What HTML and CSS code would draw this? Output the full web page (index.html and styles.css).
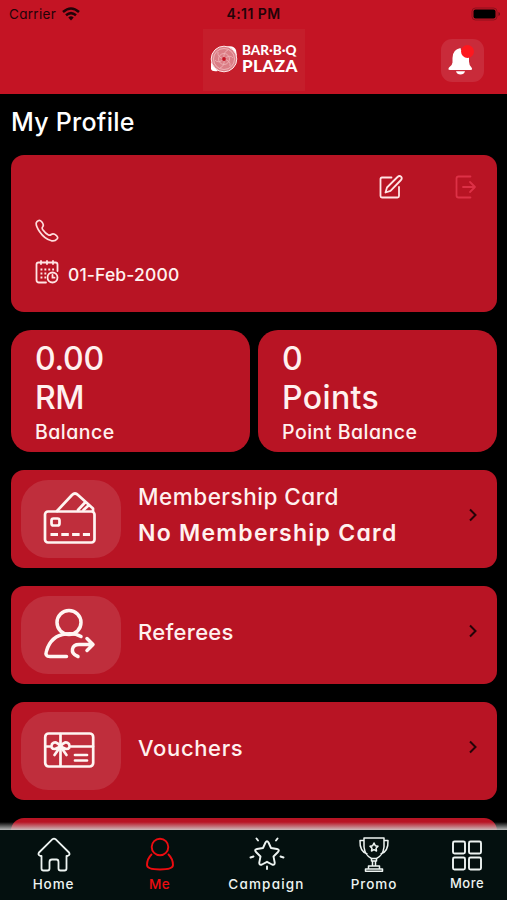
FILE: index.html
```html
<!DOCTYPE html>
<html lang="en">
<head>
<meta charset="utf-8">
<title>My Profile</title>
<link rel="stylesheet" href="styles.css">
</head>
<body>
<div class="app">
  <header class="header">
    <div class="status">
      <div class="carrier"><span>Carrier</span>
        <svg width="18" height="14" viewBox="0 0 18 14" fill="none" stroke="#220308" stroke-width="2.5"><path d="M1 5Q9-2 17 5"/><path d="M4 8.3Q9 4 14 8.3"/><path d="M6.3 10.4Q9 8.2 11.7 10.4L9 13.5Z" fill="#220308" stroke="none"/></svg>
      </div>
      <span class="time">4:11 PM</span>
      <svg class="battery" width="30" height="14" viewBox="0 0 30 14"><rect x="1" y="1" width="25" height="12" rx="3.5" fill="none" stroke="#8d101c"/><rect x="2.5" y="2.5" width="22" height="9" rx="2" fill="#000"/><path d="M27.5 5v4q1.5-.5 1.5-2t-1.500-2" fill="#6e0b16"/></svg>
    </div>
    <div class="brandbar">
      <div class="logo">
        <svg width="28" height="28" viewBox="0 0 28 28"><path d="M17 1.500Q24 0 26 5L27 11ZM1 17V24Q2 27 8 26Z" fill="#fff"/><circle cx="14" cy="14" r="12.800" fill="#db7e86" stroke="#ffe8e8" stroke-width="1"/><circle cx="14" cy="14" r="10.500" fill="none" stroke="#f3bfc2" stroke-width=".8"/><g fill="none" stroke="#f0b4b8" stroke-width=".8"><path d="M14 14Q13 7 18 5M14 14Q20 9 23 13M14 14Q21 16 20 21M14 14Q15 21 10 23M14 14Q8 19 5 15M14 14Q7 12 8 7"/><circle cx="14" cy="14" r="5.500"/></g><circle cx="14" cy="14" r="1.900" fill="#c41424"/></svg>
        <div class="wordmark"><span class="w1">BAR·B·Q</span><span class="w2">PLAZA</span></div>
      </div>
      <div class="bell">
        <svg width="43" height="43" viewBox="0 0 43 43"><path d="M19.500 9Q11.500 10.500 11.500 19V23.500Q11.500 26 8 28.500Q6.500 31 9 31H29.500Q32 31 30.500 28.500Q28 26 28 22.500V18L20 11ZM15 32.200H24Q23 35.500 19.500 35.500T15 32.200" fill="#fff"/><circle cx="26.500" cy="12.500" r="6.500" fill="#fd171e"/></svg>
      </div>
    </div>
  </header>
  <main class="content">
    <h1>My Profile</h1>
    <section class="profile card">
      <div class="actions">
        <svg width="24" height="24" viewBox="0 0 24 24" fill="none" stroke="#ffe4e4" stroke-width="1.800" stroke-linecap="round" stroke-linejoin="round"><path d="M12.500 2.500H3Q1.500 2.500 1.500 4V21Q1.500 22.500 3 22.500H18.500Q20 22.500 20 21V12"/><path d="M6.500 17.500L8 12.500L18.500 2Q20.500 .2 22 1.700T22 5L11.500 15.800Z"/></svg>
        <svg width="22" height="24" viewBox="0 0 22 24" fill="none" stroke="#dd3146" stroke-width="1.800" stroke-linecap="round" stroke-linejoin="round"><path d="M15.500 1.500H3.500Q1.500 1.500 1.500 3.500V20.500Q1.500 22.500 3.500 22.500H15.500M8 12H20M15 7L20 12L15 17"/></svg>
      </div>
      <div class="info phone">
        <svg width="24" height="24" viewBox="0 0 24 24" fill="none" stroke="#ffdcdc" stroke-width="1.700" stroke-linejoin="round"><path d="M3.200 1.700Q5 .8 6.700 2.700Q9.300 5.800 7.700 7.800Q6.500 9.200 8 11Q10.500 14.500 13.500 16Q15 16.600 16.200 15.500Q18.500 13.800 21.500 16.600Q23.500 18.500 22 20Q20 22.500 16.500 21.800Q9.500 20 4.500 12.500Q.5 6.500 1.300 3.800Q1.800 2.400 3.200 1.700Z"/></svg>
      </div>
      <div class="info date">
        <svg width="24" height="24" viewBox="0 0 24 24" fill="none" stroke="#ffe4e4" stroke-width="1.800" stroke-linecap="round"><path d="M11 22.500H4Q1.500 22.500 1.500 20V4.500Q1.500 2.500 3.500 2.500H20.500Q22.500 2.500 22.500 4.500V11M6 .9V4M12 .9V4M18 .9V4"/><path d="M5.500 9.500H19M5.500 13.500H13M5.500 17.500H11" stroke-width="1.900" stroke-linecap="butt" stroke-dasharray="1.900 2"/><circle cx="17.500" cy="17.500" r="5"/><path d="M17.500 15V17.700H19.500"/></svg>
        <span class="dob">01-Feb-2000</span>
      </div>
    </section>
    <section class="stats">
      <div class="stat card"><span class="big n1">0.00</span><span class="big n2">RM</span><span class="label">Balance</span></div>
      <div class="stat card"><span class="big">0</span><span class="big n3">Points</span><span class="label">Point Balance</span></div>
    </section>
    <a class="row card">
      <span class="tile"><svg class="cardicon" width="54" height="54" viewBox="0 0 54 54" fill="none" stroke="#fff5f2" stroke-width="2.700" stroke-linecap="round" stroke-linejoin="round"><rect x="2" y="21.500" width="49.500" height="31" rx="3"/><path d="M14 21L29 5Q32 2 35 5L50 18.500V21M35 20L42.500 12M40.500 20L46 15"/><rect x="8.500" y="28.500" width="8" height="7" rx="2"/><path d="M7.500 44.500H47" stroke-width="3" stroke-linecap="butt" stroke-dasharray="7.500 3.300"/></svg></span>
      <span class="text"><span class="t1 mc">Membership Card</span><span class="t2">No Membership Card</span></span>
      <svg class="chev" width="10" height="14" viewBox="0 0 10 14"><path d="M2 1.500L7.500 7L2 12.500" fill="none" stroke="#250308" stroke-width="2"/></svg>
    </a>
    <a class="row card">
      <span class="tile"><svg width="54" height="54" viewBox="0 0 54 54" fill="none" stroke="#fff5f2" stroke-width="3.500" stroke-linecap="round" stroke-linejoin="round"><circle cx="26" cy="15.500" r="12"/><path d="M38 29.500Q32 26 23 27Q8 28.500 3.500 44Q1.500 49.500 7 49.500H23.500"/><path d="M35 49.500Q28.500 47 29.500 42Q30.500 37.500 36 37.500H49M44 31.500L50 37.500L44 43.500"/></svg></span>
      <span class="text"><span class="t1 rf">Referees</span></span>
      <svg class="chev" width="10" height="14" viewBox="0 0 10 14"><path d="M2 1.500L7.500 7L2 12.500" fill="none" stroke="#250308" stroke-width="2"/></svg>
    </a>
    <a class="row card">
      <span class="tile"><svg width="54" height="54" viewBox="0 0 54 54" fill="none" stroke="#fff5f2" stroke-width="2.700" stroke-linecap="round" stroke-linejoin="round"><rect x="2.200" y="10.500" width="48" height="33" rx="3.500"/><path d="M17.500 11V43M3 23.500H7M28 23.500H50M32 32H44M32 37.500H44"/><path d="M17.500 23.500L11.500 32M17.500 23.500L23.500 32M17.500 23.500Q13 17 9 21Q7 26 12 26ZM17.500 23.500Q22 17 26 21Q28 26 23 26Z"/></svg></span>
      <span class="text"><span class="t1 vc">Vouchers</span></span>
      <svg class="chev" width="10" height="14" viewBox="0 0 10 14"><path d="M2 1.500L7.500 7L2 12.500" fill="none" stroke="#250308" stroke-width="2"/></svg>
    </a>
    <a class="row card"></a>
  </main>
  <nav class="nav">
    <a class="item home"><svg width="36" height="36" viewBox="0 0 36 36" fill="none" stroke="#eef4f2" stroke-width="1.800" stroke-linejoin="round"><path d="M16.500 2.200Q18 1 19.500 2.200L33 15.500Q34.500 18 31.500 19H30.500V31.500Q30.500 33.500 28.500 33.500H24.500Q22.500 33.500 22.500 31.500V25Q22.500 22.500 20.500 22.500H16Q13.500 22.500 13.500 25V31.500Q13.500 33.500 11.500 33.500H7.500Q5.500 33.500 5.500 31.500V19H4.500Q1.500 18 3 15.500Z"/></svg><span>Home</span></a>
    <a class="item me"><svg width="36" height="36" viewBox="0 0 36 36" fill="none" stroke="#ec0c10" stroke-width="1.900" stroke-linecap="round"><circle cx="18" cy="10" r="8.300"/><path d="M9.500 17.500Q5 22 5 28Q5 32.500 18 32.500T31 28Q31 22 26.500 17.500"/></svg><span>Me</span></a>
    <a class="item campaign"><svg width="36" height="36" viewBox="0 0 36 36" fill="none" stroke="#eef4f2" stroke-width="1.900" stroke-linejoin="round" stroke-linecap="round"><path d="M16.500 5.500Q18 3 19.500 5.500L22 11L28 12Q31 12.700 29 15L24.500 19.500L25.700 25.500Q26 28.500 23 27.500L18 24.800L13 27.500Q10 28.500 10.300 25.500L11.500 19.500L7 15Q5 12.700 8 12L14 11Z"/><path d="M7.500 1.500L9 3.500M28.500 1.500L27 3.500M1.500 20.500L4.500 19.500M34.500 20.500L31.500 19.500M18 29.500V32"/></svg><span>Campaign</span></a>
    <a class="item promo"><svg width="36" height="36" viewBox="0 0 36 36" fill="none" stroke="#eef4f2" stroke-width="1.500" stroke-linejoin="round"><path d="M8 1H28V10Q27 18.500 20.500 21.500H15.500Q9 18.500 8 10ZM8 3.500H4Q3.500 15 11.500 17M28 3.500H32Q32.500 15 24.500 17M15.500 21.500H20.500V24H15.500ZM16.500 24V29H19.500V24M12.500 29H23.500V32H12.500ZM9.500 32H26.500V34.300H9.500Z"/><path d="M18 6L19.300 8.700L22 9.200L20 11.200L20.500 14L18 12.700L15.500 14L16 11.200L14 9.200L16.700 8.700Z"/></svg><span>Promo</span></a>
    <a class="item more"><svg width="36" height="36" viewBox="0 0 36 36" fill="none" stroke="#eef4f2" stroke-width="1.900"><rect x="4" y="4.500" width="12" height="12" rx="1.500"/><rect x="20" y="4.500" width="12" height="12" rx="1.500"/><rect x="4" y="20.500" width="12" height="12" rx="1.500"/><rect x="20" y="20.500" width="12" height="12" rx="1.500"/></svg><span>More</span></a>
  </nav>
</div>
</body>
</html>
```
FILE: styles.css
```css
* { box-sizing: border-box; }
body { margin: 0; background: #000; font-family: Inter, "Liberation Sans", sans-serif; font-feature-settings: "cv11"; color: #fff1ef; }
svg { display: block; flex: none; }
.app { width: 507px; height: 900px; overflow: hidden; display: flex; flex-direction: column; }
.header { height: 94px; flex: none; background: #c41424; }
.status { height: 29px; display: grid; grid-template-columns: 1fr auto 1fr; align-items: center; padding: 0 6px 2px 9px; color: #220308; font-size: 13.5px; line-height: 26px; }
.carrier { display: flex; align-items: center; gap: 6px; letter-spacing: .3px; }
.time { font-size: 14px; font-weight: 600; letter-spacing: .45px; margin-right: 3px; }
.battery { justify-self: end; }
.brandbar { height: 62px; display: grid; grid-template-columns: 203px 102px 1fr; align-items: center; }
.logo { grid-column: 2; height: 62px; background: #c51e2b; display: flex; align-items: center; gap: 4px; padding: 0 0 2px 7px; }
.wordmark { display: flex; flex-direction: column; color: #fff; font-family: Lato, sans-serif; font-weight: 900; }
.w1 { font-size: 13.5px; line-height: 14px; }
.w2 { font-size: 17px; line-height: 17px; margin-bottom: 1px; letter-spacing: .4px; }
.bell { justify-self: end; margin-right: 23px; width: 43px; height: 43px; background: #c92b3a; border-radius: 11px; }
.content { flex: 1; min-height: 0; overflow: hidden; padding: 0 10px 0 11px; display: flex; flex-direction: column; gap: 18px; }
h1 { margin: 0 0 -18px; height: 60.5px; flex: none; padding-top: 10.5px; font-size: 25px; line-height: 34px; font-weight: 500; letter-spacing: .25px; color: #fff; }
.card { background: #b81424; border-radius: 13px; flex: none; }
.profile { height: 157.5px; padding: 20px 20px 0 24px; }
.actions { display: flex; justify-content: flex-end; gap: 52px; }
.info { display: flex; align-items: center; gap: 9px; }
.phone { margin-top: 20px; }
.date { margin-top: 16px; }
.dob { font-size: 17.5px; line-height: 20px; font-weight: 500; padding-top: 6px; letter-spacing: .15px; }
.stats { display: grid; grid-template-columns: 239px 239px; gap: 8px; height: 122px; flex: none; }
.stat { border-radius: 20px; padding: 10px 24px 0; display: flex; flex-direction: column; align-items: flex-start; }
.big { font-size: 32px; line-height: 38.5px; font-weight: 500; }
.n1 { letter-spacing: -.3px; }
.n2 { letter-spacing: -.6px; }
.n3 { letter-spacing: .4px; }
.label { font-size: 19.5px; line-height: 31px; font-weight: 500; letter-spacing: .5px; }
.row { height: 98px; display: flex; align-items: center; padding: 0 19px 0 10px; }
.tile { width: 100px; height: 78px; border-radius: 27px; background: #bf2e3c; display: flex; align-items: center; justify-content: center; padding: 0 2px 2px 0; }
.cardicon { margin-bottom: 2px; }
.text { flex: 1; margin-left: 17px; display: flex; flex-direction: column; padding-bottom: 8px; }
.t1, .t2 { font-size: 22px; line-height: 36.5px; font-weight: 500; white-space: nowrap; }
.mc { font-size: 22.5px; letter-spacing: .5px; }
.rf { letter-spacing: .3px; }
.vc { letter-spacing: .65px; }
.rf, .vc { padding-top: 2px; }
.t2 { font-size: 23px; font-weight: 600; letter-spacing: 1.25px; }
.chev { margin-bottom: 8px; }
.nav { height: 70px; flex: none; position: relative; background: #04100f; display: grid; grid-template-columns: 107px 105px 109px 106px 80px; padding-top: 7px; }
.nav::before { content: ""; position: absolute; left: 0; right: 0; bottom: 100%; height: 8px; background: linear-gradient(rgba(205,205,205,0), rgba(205,205,205,.9)); }
.item { display: flex; flex-direction: column; align-items: center; gap: 3px; font-size: 13.5px; line-height: 16px; font-weight: 500; color: #eef4f2; letter-spacing: .9px; }
.campaign { letter-spacing: 1.2px; }
.more { font-size: 13px; letter-spacing: .5px; }
.more span { margin-top: -1px; }
.me { color: #ec0c10; letter-spacing: .4px; }
```
